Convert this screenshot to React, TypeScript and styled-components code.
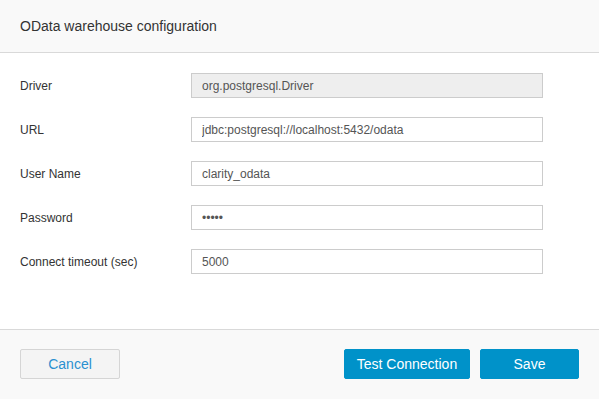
import React from "react";
import styled, { createGlobalStyle } from "styled-components";

const Global = createGlobalStyle`
  html, body { margin: 0; padding: 0; background: #ffffff; }
  body { font-family: "Liberation Sans", Arial, sans-serif; }
  * { box-sizing: border-box; }
`;

const Dialog = styled.div`
  width: 599px;
  height: 399px;
  display: flex;
  flex-direction: column;
  background: #ffffff;
`;

const Header = styled.div`
  height: 53px;
  flex: none;
  background: #f9f9f9;
  border-bottom: 1px solid #d9d9d9;
  display: flex;
  align-items: center;
  padding: 0 20px 1px;
`;

const Title = styled.h1`
  margin: 0;
  font-size: 14px;
  font-weight: normal;
  color: #333333;
`;

const Body = styled.div`
  flex: 1;
  padding: 20px 56px 0 20px;
  display: flex;
  flex-direction: column;
  gap: 19px;
`;

const Row = styled.div`
  display: grid;
  grid-template-columns: 171px 1fr;
  align-items: center;
  height: 25px;
`;

const Label = styled.label`
  font-size: 12px;
  color: #333333;
`;

const Input = styled.input<{ $disabled?: boolean }>`
  height: 25px;
  width: 100%;
  border: 1px solid #cccccc;
  background: ${(p) => (p.$disabled ? "#eeeeee" : "#ffffff")};
  padding: 0 10px;
  font-family: "Liberation Sans", Arial, sans-serif;
  font-size: 12px;
  color: #555555;
  outline: none;
  border-radius: 0;
`;

const Footer = styled.div`
  height: 70px;
  flex: none;
  background: #f9f9f9;
  border-top: 1px solid #d9d9d9;
  display: flex;
  align-items: flex-start;
  padding: 19px 20px 0;
  gap: 10px;
`;

const Button = styled.button<{ $primary?: boolean; $w: number }>`
  height: 30px;
  width: ${(p) => p.$w}px;
  border-radius: 2px;
  font-family: "Liberation Sans", Arial, sans-serif;
  font-size: 14px;
  cursor: pointer;
  padding: 0;
  border: 1px solid ${(p) => (p.$primary ? "#0092c9" : "#d5d5d5")};
  background: ${(p) => (p.$primary ? "#0092c9" : "#f4f4f4")};
  color: ${(p) => (p.$primary ? "#ffffff" : "#2a90d0")};
`;

const Spacer = styled.div`
  flex: 1;
`;

const fields = [
  { label: "Driver", value: "org.postgresql.Driver", disabled: true, type: "text" },
  { label: "URL", value: "jdbc:postgresql://localhost:5432/odata", type: "text" },
  { label: "User Name", value: "clarity_odata", type: "text" },
  { label: "Password", value: "12345", type: "password" },
  { label: "Connect timeout (sec)", value: "5000", type: "text" },
];

export default function App() {
  return (
    <>
      <Global />
      <Dialog>
        <Header>
          <Title>OData warehouse configuration</Title>
        </Header>
        <Body>
          {fields.map((f) => (
            <Row key={f.label}>
              <Label>{f.label}</Label>
              <Input
                type={f.type}
                defaultValue={f.value}
                readOnly={f.disabled}
                $disabled={f.disabled}
              />
            </Row>
          ))}
        </Body>
        <Footer>
          <Button $w={100}>Cancel</Button>
          <Spacer />
          <Button $primary $w={126}>Test Connection</Button>
          <Button $primary $w={99}>Save</Button>
        </Footer>
      </Dialog>
    </>
  );
}
